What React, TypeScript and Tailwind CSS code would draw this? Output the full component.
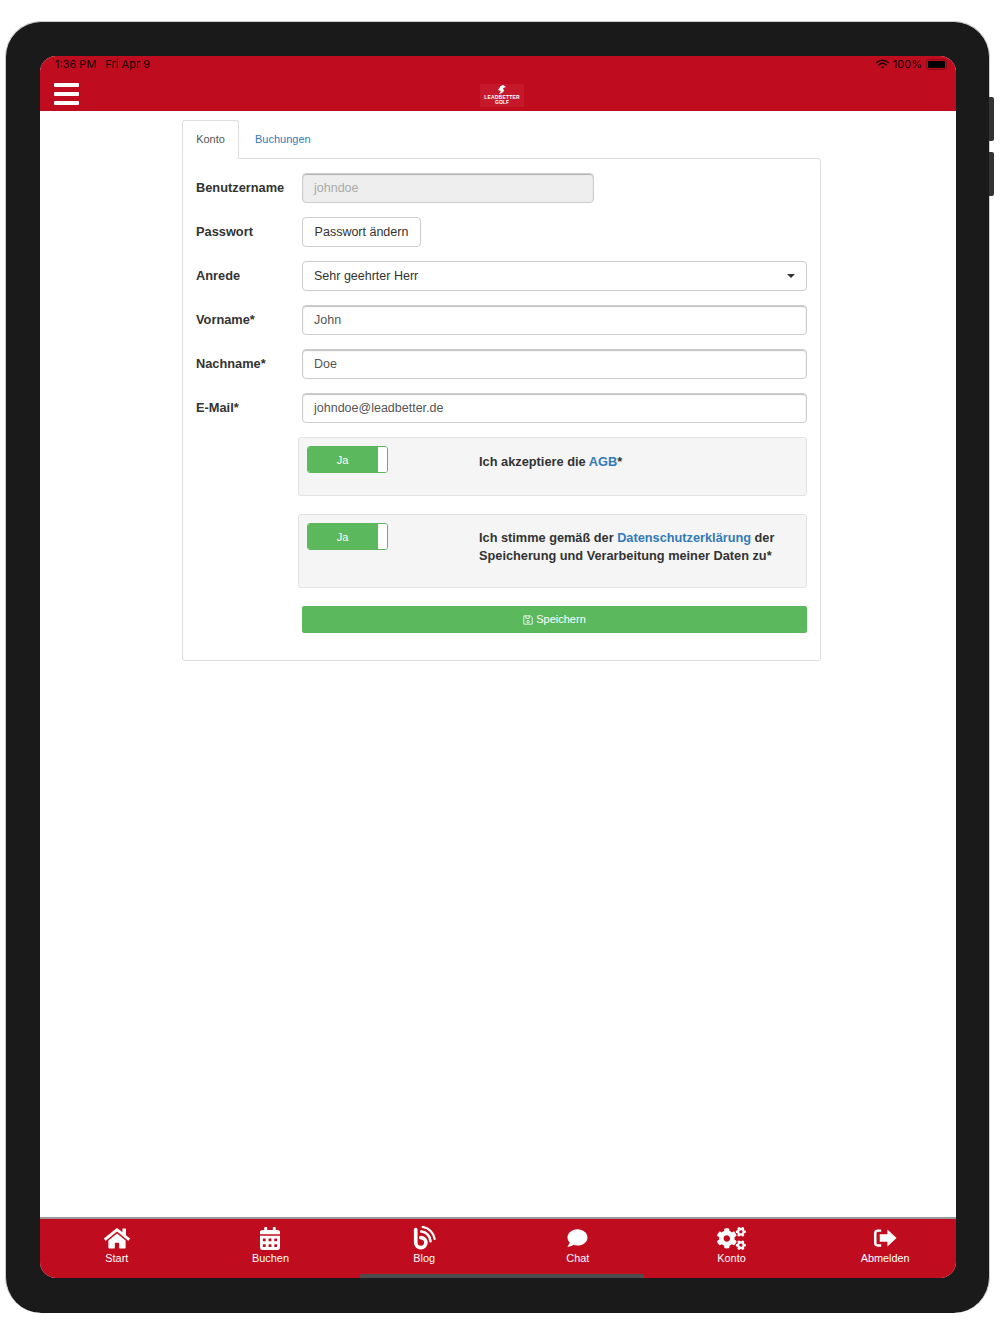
import { FaHome, FaCalendarAlt, FaComment, FaCogs } from "react-icons/fa";

function BlogIcon() {
  return (
    <svg viewBox="0 0 24 26" className="w-[23px] h-[24px]" fill="none" stroke="white" strokeLinecap="round">
      <path d="M2.5 4v14a5.500 5.500 0 1 0 5.500-5.500" strokeWidth="4" />
      <path d="M8.500 6a11 11 0 0 1 10 10.500" strokeWidth="2.800" />
      <path d="M10 1a15.500 15.500 0 0 1 13 13" strokeWidth="2.400" />
    </svg>
  );
}

function SignOutIcon() {
  return (
    <svg viewBox="0 0 24 20" className="w-[23px] h-[20px]" fill="white">
      <path d="M7.500 1H4a4 4 0 0 0-4 4v10a4 4 0 0 0 4 4h3.500v-2.400H4.200A1.600 1.600 0 0 1 2.600 15V5a1.600 1.600 0 0 1 1.600-1.600h3.300z" />
      <path d="M14 1.200 23.500 10 14 18.800v-5H6v-7.600h8z" />
    </svg>
  );
}

function Toggle() {
  return (
    <div className="flex w-[81px] h-[27px] rounded-[3px] border border-[#5cb85c] overflow-hidden shrink-0 bg-white">
      <div className="w-[70px] bg-[#5cb85c] text-white text-[11px] leading-[26px] text-center pr-[1px]">Ja</div>
      <div className="flex-1 bg-white" />
    </div>
  );
}

function Row({ label, children }: { label: string; children: React.ReactNode }) {
  return (
    <div className="flex items-center h-[30px] mb-[14px]">
      <div className="w-[106px] shrink-0 font-bold text-[12.8px] leading-[28px] text-[#333]">{label}</div>
      {children}
    </div>
  );
}

function TextInput({ value, className }: { value: string; className?: string }) {
  return (
    <div className={"h-[30px] w-[505px] rounded-[4px] border border-[#ccc] shadow-[inset_0_1px_1px_rgba(0,0,0,0.25)] px-[11px] text-[12.5px] leading-[28px] text-[#555] bg-white " + (className ?? "")}>
      {value}
    </div>
  );
}

const nav = [
  { label: "Start", icon: <FaHome className="w-[26px] h-[23px] text-white" /> },
  { label: "Buchen", icon: <FaCalendarAlt className="w-[20px] h-[23px] text-white" /> },
  { label: "Blog", icon: <BlogIcon /> },
  { label: "Chat", icon: <FaComment className="w-[23px] h-[20px] text-white" /> },
  { label: "Konto", icon: <FaCogs className="w-[29px] h-[23px] text-white" /> },
  { label: "Abmelden", icon: <SignOutIcon /> },
];

export default function App() {
  return (
    <div className="w-[1000px] h-[1334px] bg-white pl-[5px] pt-[21px] font-['Liberation_Sans',Arial,sans-serif]">
      <div className="relative w-[985px] h-[1292px] rounded-[36px] bg-[#1a1a1a] border-t border-x border-[#ccc] pl-[34px] pt-[34px]">
        <div className="absolute right-[-5px] top-[75px] w-[5px] h-[44px] bg-[#333] rounded-r-[2px]" />
        <div className="absolute right-[-5px] top-[130px] w-[5px] h-[44px] bg-[#333] rounded-r-[2px]" />
        <div className="relative w-[916px] h-[1222px] rounded-[16px] overflow-hidden bg-white flex flex-col">
          <header className="h-[55px] bg-[#bf0d1f] shrink-0 relative">
            <div className="flex justify-between items-center h-[16px] pl-[15px] pr-[9px] text-[11px] text-[#1a0508] font-['Inter',sans-serif]">
              <div className="flex gap-[9px]">
                <span>1:36 PM</span>
                <span>Fri Apr 9</span>
              </div>
              <div className="flex items-center gap-[4px]">
                <svg viewBox="0 0 16 12" className="w-[13px] h-[10px]" fill="none" stroke="#1a0508" strokeWidth="2" strokeLinecap="round">
                  <path d="M1 4.200a10 10 0 0 1 14 0" />
                  <path d="M3.600 7a6.300 6.300 0 0 1 8.800 0" />
                  <circle cx="8" cy="10" r="1.300" fill="#1a0508" stroke="none" />
                </svg>
                <span>100%</span>
                <div className="w-[21px] h-[11px] rounded-[3px] border border-[#8a0a18] p-[1px]">
                  <div className="w-full h-full bg-black rounded-[1px]" />
                </div>
              </div>
            </div>
            <div className="flex flex-col gap-[5px] absolute left-[14px] top-[27px]">
              <div className="w-[25px] h-[4px] bg-white rounded-[1px]" />
              <div className="w-[25px] h-[4px] bg-white rounded-[1px]" />
              <div className="w-[25px] h-[4px] bg-white rounded-[1px]" />
            </div>
            <div className="absolute left-[440px] top-[28px] w-[44px] h-[23px] bg-[#c5192b] flex flex-col items-center overflow-hidden">
              <svg viewBox="0 0 14 10" className="w-[14px] h-[10px] mt-[1px]" fill="white">
                <path d="M5 1.500 8 0l3 2-3 1 1 3-2 2-3 1 2-3-3-1 2-3z" />
              </svg>
              <span className="text-[5px] leading-[5px] font-bold text-white tracking-[0.2px]">LEADBETTER</span>
              <span className="text-[5px] leading-[5px] font-bold text-white">GOLF</span>
            </div>
          </header>

          <main className="flex-1 min-h-0 pl-[142px] pt-[9px]">
            <div className="flex items-end h-[38px] text-[11px]">
              <div className="relative z-10 w-[57px] h-[39px] mb-[-1px] border border-[#ddd] border-b-white rounded-t-[3px] bg-white text-[#555] text-center leading-[37px]">
                Konto
              </div>
              <div className="ml-[16px] h-[38px] leading-[39px] text-[#337ab7]">Buchungen</div>
            </div>
            <div className="w-[639px] h-[503px] border border-[#ddd] rounded-[3px] rounded-tl-none pl-[13px] pr-[13px] pt-[14px] bg-white">
              <Row label="Benutzername">
                <TextInput value="johndoe" className="!w-[292px] !bg-[#eee] !text-[#aaa]" />
              </Row>
              <Row label="Passwort">
                <div className="h-[30px] w-[119px] rounded-[4px] border border-[#ccc] text-center text-[12.5px] leading-[28px] text-[#333]">Passwort ändern</div>
              </Row>
              <Row label="Anrede">
                <div className="relative h-[30px] w-[505px] rounded-[4px] border border-[#ccc] px-[11px] text-[12.5px] leading-[28px] text-[#333]">
                  Sehr geehrter Herr
                  <div className="absolute right-[11px] top-[12px] w-0 h-0 border-x-[4px] border-x-transparent border-t-[4px] border-t-[#333]" />
                </div>
              </Row>
              <Row label="Vorname*"><TextInput value="John" /></Row>
              <Row label="Nachname*"><TextInput value="Doe" /></Row>
              <Row label="E-Mail*"><TextInput value="johndoe@leadbetter.de" /></Row>

              <div className="ml-[102px] w-[509px] h-[59px] mb-[18px] flex bg-[#f5f5f5] border border-[#e3e3e3] rounded-[3px] pl-[8px] pt-[8px]">
                <Toggle />
                <div className="ml-[91px] pt-[7px] text-[12.8px] leading-[18px] font-bold text-[#333]">
                  Ich akzeptiere die <span className="text-[#337ab7]">AGB</span>*
                </div>
              </div>
              <div className="ml-[102px] w-[509px] h-[74px] mb-[18px] flex bg-[#f5f5f5] border border-[#e3e3e3] rounded-[3px] pl-[8px] pt-[8px]">
                <Toggle />
                <div className="ml-[91px] pt-[6px] text-[12.75px] leading-[18px] font-bold text-[#333]">
                  <div className="flex gap-[3.5px]">
                    <span>Ich stimme gemäß der</span>
                    <span className="text-[#337ab7]">Datenschutzerklärung</span>
                    <span>der</span>
                  </div>
                  <div>Speicherung und Verarbeitung meiner Daten zu*</div>
                </div>
              </div>
              <div className="ml-[106px] w-[505px] h-[27px] rounded-[2px] bg-[#5cb85c] text-white text-[11px] flex items-center justify-center gap-[3px]">
                <svg viewBox="0 0 12 12" className="w-[10px] h-[10px]" fill="none" stroke="white" strokeWidth="1">
                  <path d="M1 1h8l2 2v8H1z" />
                  <path d="M3.500 1v3h4V1" />
                  <circle cx="6" cy="8" r="1.500" />
                </svg>
                <span>Speichern</span>
              </div>
            </div>
          </main>

          <footer className="relative h-[61px] shrink-0 bg-[#bf0d1f] border-t-2 border-[#999]">
            <div className="grid grid-cols-6 w-[922px]">
              {nav.map((n) => (
                <div key={n.label} className="flex flex-col items-center pt-[7px]">
                  <div className="h-[24px] flex items-center justify-center">{n.icon}</div>
                  <div className="text-[10.9px] leading-[14px] mt-[1px] text-white">{n.label}</div>
                </div>
              ))}
            </div>
            <div className="absolute bottom-0 left-[320px] w-[284px] h-[4px] bg-[#4d4d4d] rounded-t-[2px]" />
          </footer>
        </div>
      </div>
    </div>
  );
}
